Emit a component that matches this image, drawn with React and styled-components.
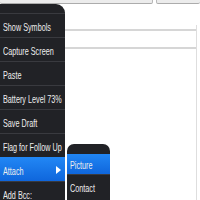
import React from "react";
import styled, { createGlobalStyle } from "styled-components";

const GlobalStyle = createGlobalStyle`
  html, body {
    margin: 0;
    padding: 0;
    background: #ffffff;
  }
  body {
    font-family: "Liberation Sans", Arial, sans-serif;
  }
`;

const menuItems = [
  "Show Symbols",
  "Capture Screen",
  "Paste",
  "Battery Level 73%",
  "Save Draft",
  "Flag for Follow Up",
  "Attach",
  "Add Bcc:",
];

const subItems = ["Picture", "Contact"];

const Screen = () => {
  return (
    <>
      <GlobalStyle />
      <ScreenStyled>
        <TopFields>
          <TopField />
          <TopField className="right" />
        </TopFields>
        <Compose>
          <FieldRow $height={4} />
          <FieldRow $height={16} />
          <Body />
        </Compose>

        <Menu>
          {menuItems.map((item) => (
            <MenuItem key={item} $active={item === "Attach"}>
              <Label>{item}</Label>
              {item === "Attach" && (
                <svg width="5" height="8" viewBox="0 0 5 8">
                  <polygon points="0,0 5,4 0,8" fill="#ffffff" />
                </svg>
              )}
            </MenuItem>
          ))}
        </Menu>

        <SubMenu>
          {subItems.map((item) => (
            <SubItem key={item} $active={item === "Picture"}>
              <Label>{item}</Label>
            </SubItem>
          ))}
        </SubMenu>
      </ScreenStyled>
    </>
  );
};

const ScreenStyled = styled.div`
  position: relative;
  width: 200px;
  height: 200px;
  overflow: hidden;
  display: flex;
  flex-direction: column;
  background: #ffffff;
`;

const TopFields = styled.div`
  display: flex;
  gap: 3px;
  height: 4px;
  flex-shrink: 0;
`;

const TopField = styled.div`
  flex: 0 0 153px;
  background: #ececec;
  border-bottom: 1px solid #acacac;
  border-right: 1px solid #b8b8b8;
  border-radius: 0 0 2px 2px;
  box-sizing: border-box;

  &.right {
    flex: 1;
    border-left: 1px solid #b8b8b8;
    border-right: none;
  }
`;

const Compose = styled.div`
  flex: 1;
  display: flex;
  flex-direction: column;
  margin-top: 21px;
  margin-right: 3px;
  border-right: 1px solid #dedede;
`;

const FieldRow = styled.div`
  height: ${(props) => props.$height}px;
  flex-shrink: 0;
  border-bottom: 2px solid #d6d6d6;
`;

const Body = styled.div`
  flex: 1;
`;

/* the device font is narrow, so squeeze the label horizontally */
const Label = styled.span`
  display: inline-block;
  flex-shrink: 0;
  font-size: 10.5px;
  transform: scaleX(0.69);
  transform-origin: left center;
`;

const Menu = styled.div`
  position: absolute;
  left: 0;
  top: 4px;
  width: 65px;
  height: 220px;
  padding-top: 9px;
  box-sizing: border-box;
  background: #212226;
  border-top-right-radius: 9px;
`;

const MenuItem = styled.div`
  height: 24px;
  box-sizing: border-box;
  border-top: 1px solid #393a3f;
  padding: 2px 4px 0 3px;
  display: flex;
  align-items: center;
  justify-content: space-between;
  overflow: hidden;
  color: #eeeeee;
  white-space: nowrap;
  background: ${(props) =>
    props.$active ? "linear-gradient(#2186f4, #0f66dc)" : "transparent"};
  border-top-color: ${(props) => (props.$active ? "#2186f4" : "#393a3f")};

  svg {
    flex-shrink: 0;
    margin-top: -2px;
  }
`;

const SubMenu = styled.div`
  position: absolute;
  left: 67px;
  top: 144px;
  width: 43px;
  height: 70px;
  padding-top: 10px;
  box-sizing: border-box;
  background: #212226;
  border-radius: 7px 7px 0 0;
`;

const SubItem = styled.div`
  height: ${(props) => (props.$active ? 21 : 24)}px;
  box-sizing: border-box;
  padding: 1px 0 0 3px;
  display: flex;
  align-items: center;
  overflow: hidden;
  color: #eeeeee;
  white-space: nowrap;
  background: ${(props) =>
    props.$active ? "linear-gradient(#2186f4, #0f66dc)" : "transparent"};
  border-bottom: ${(props) => (props.$active ? "1px solid #393a3f" : "none")};
`;

export default Screen;
